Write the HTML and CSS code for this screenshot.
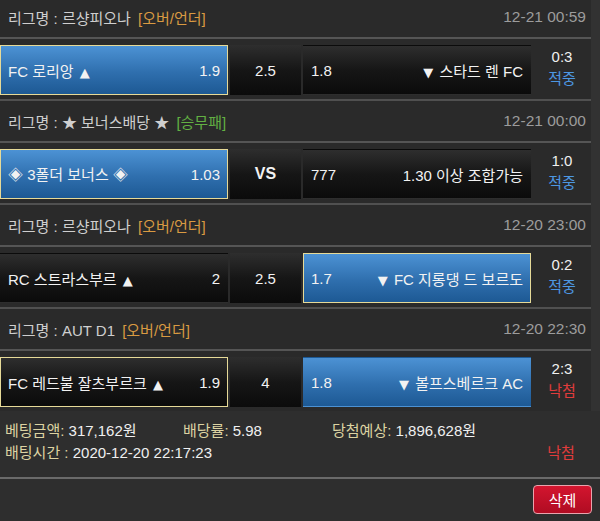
FILE: index.html
```html
<!DOCTYPE html>
<html lang="ko">
<head>
<meta charset="utf-8">
<link rel="stylesheet" href="styles.css">
</head>
<body>
<div class="list">
  <div class="block">
    <div class="head"><span class="league">리그명 : 르샹피오나 <span class="tag orange">[오버/언더]</span></span><span class="date">12-21 00:59</span></div>
    <div class="match">
      <div class="pick blue sel"><span>FC 로리앙 <span class="tri">▲</span></span><span>1.9</span></div>
      <div class="mid dark">2.5</div>
      <div class="pick dark"><span>1.8</span><span><span class="tri">▼</span> 스타드 렌 FC</span></div>
      <div class="score"><span>0:3</span><span class="hit">적중</span></div>
    </div>
  </div>
  <div class="block">
    <div class="head"><span class="league">리그명 : ★ 보너스배당 ★ <span class="tag green">[승무패]</span></span><span class="date">12-21 00:00</span></div>
    <div class="match">
      <div class="pick blue sel"><span>◈ 3폴더 보너스 ◈</span><span>1.03</span></div>
      <div class="mid dark vs">VS</div>
      <div class="pick dark"><span>777</span><span>1.30 이상 조합가능</span></div>
      <div class="score"><span>1:0</span><span class="hit">적중</span></div>
    </div>
  </div>
  <div class="block">
    <div class="head"><span class="league">리그명 : 르샹피오나 <span class="tag orange">[오버/언더]</span></span><span class="date">12-20 23:00</span></div>
    <div class="match">
      <div class="pick dark"><span>RC 스트라스부르 <span class="tri">▲</span></span><span>2</span></div>
      <div class="mid dark">2.5</div>
      <div class="pick blue sel"><span>1.7</span><span><span class="tri">▼</span> FC 지롱댕 드 보르도</span></div>
      <div class="score"><span>0:2</span><span class="hit">적중</span></div>
    </div>
  </div>
  <div class="block">
    <div class="head"><span class="league">리그명 : AUT D1 <span class="tag orange">[오버/언더]</span></span><span class="date">12-20 22:30</span></div>
    <div class="match">
      <div class="pick dark sel"><span>FC 레드불 잘츠부르크 <span class="tri">▲</span></span><span>1.9</span></div>
      <div class="mid dark">4</div>
      <div class="pick blue"><span>1.8</span><span><span class="tri">▼</span> 볼프스베르크 AC</span></div>
      <div class="score"><span>2:3</span><span class="miss">낙첨</span></div>
    </div>
  </div>
</div>
<div class="details">
  <div><span class="label">베팅금액:</span> 317,162원</div>
  <div><span class="label">배당률:</span> 5.98</div>
  <div><span class="label">당첨예상:</span> 1,896,628원</div>
  <div></div>
  <div class="span3"><span class="label">배팅시간 :</span> 2020-12-20 22:17:23</div>
  <div class="result miss">낙첨</div>
</div>
<div class="actions">
  <button class="delete">삭제</button>
</div>
</body>
</html>
```
FILE: styles.css
```css
html, body {
  margin: 0;
  padding: 0;
}
body {
  width: 600px;
  height: 521px;
  overflow: hidden;
  background: #323232;
  font-family: "Liberation Sans", "Noto Sans CJK KR", sans-serif;
  font-size: 15px;
  color: #f2f2f2;
}
.list {
  width: 591px;
  margin-top: -3px;
  background: #2a2a2a;
}
.block {
  border-top: 2px solid #505050;
}
.block:first-child {
  border-top: none;
}
.head {
  height: 40px;
  display: flex;
  align-items: center;
  justify-content: space-between;
  padding: 0 5px 0 8px;
  border-bottom: 2px solid #555;
  color: #cfcfcf;
}
.tag {
  margin-left: 3px;
}
.tag.orange { color: #d99a42; }
.tag.green { color: #62b043; }
.date {
  color: #9c9c9c;
  font-size: 15.5px;
}
.match {
  display: flex;
  gap: 2px;
  padding: 6px 0 4px;
  height: 50px;
}
.pick {
  width: 228px;
  box-sizing: border-box;
  display: flex;
  align-items: center;
  justify-content: space-between;
  padding: 0 7px 0 7px;
  border: 1px solid transparent;
}
.tri {
  font-family: "DejaVu Sans", sans-serif;
  font-size: 13px;
  margin: 0 2px;
}
.mid {
  width: 71px;
  display: flex;
  align-items: center;
  justify-content: center;
}
.vs {
  font-weight: bold;
  font-size: 16px;
}
.blue {
  background: linear-gradient(#4c92d4, #2f6fae 55%, #1d5994);
}
.dark {
  background: linear-gradient(#2e2e2e, #161616 50%, #0b0b0b);
}
.sel {
  border-color: #e6da98;
}
.score {
  flex: 1;
  display: flex;
  flex-direction: column;
  align-items: center;
  justify-content: center;
  line-height: 22px;
  padding-bottom: 4px;
  color: #f0f0f0;
}
.hit { color: #4d97e2; }
.miss { color: #e03c3c; }
.details {
  display: grid;
  grid-template-columns: 178px 149px 1fr 60px;
  padding: 9px 9px 13px 5px;
  line-height: 22px;
  border-bottom: 2px solid #6a6a6a;
  color: #f0f0f0;
  background: #2e2e2e;
}
.label { color: #dcd3a2; }
.span3 { grid-column: 1 / span 3; }
.result { text-align: center; }
.actions {
  display: flex;
  justify-content: flex-end;
  padding: 6px 8px 0 0;
  background: #2e2e2e;
  height: 42px;
}
.delete {
  width: 59px;
  height: 29px;
  border: 1px solid #e9a3ad;
  border-radius: 4px;
  background: linear-gradient(#d3152f, #b00c22);
  color: #fff;
  font-family: "Liberation Sans", "Noto Sans CJK KR", sans-serif;
  font-size: 15px;
  padding: 0;
}
```
